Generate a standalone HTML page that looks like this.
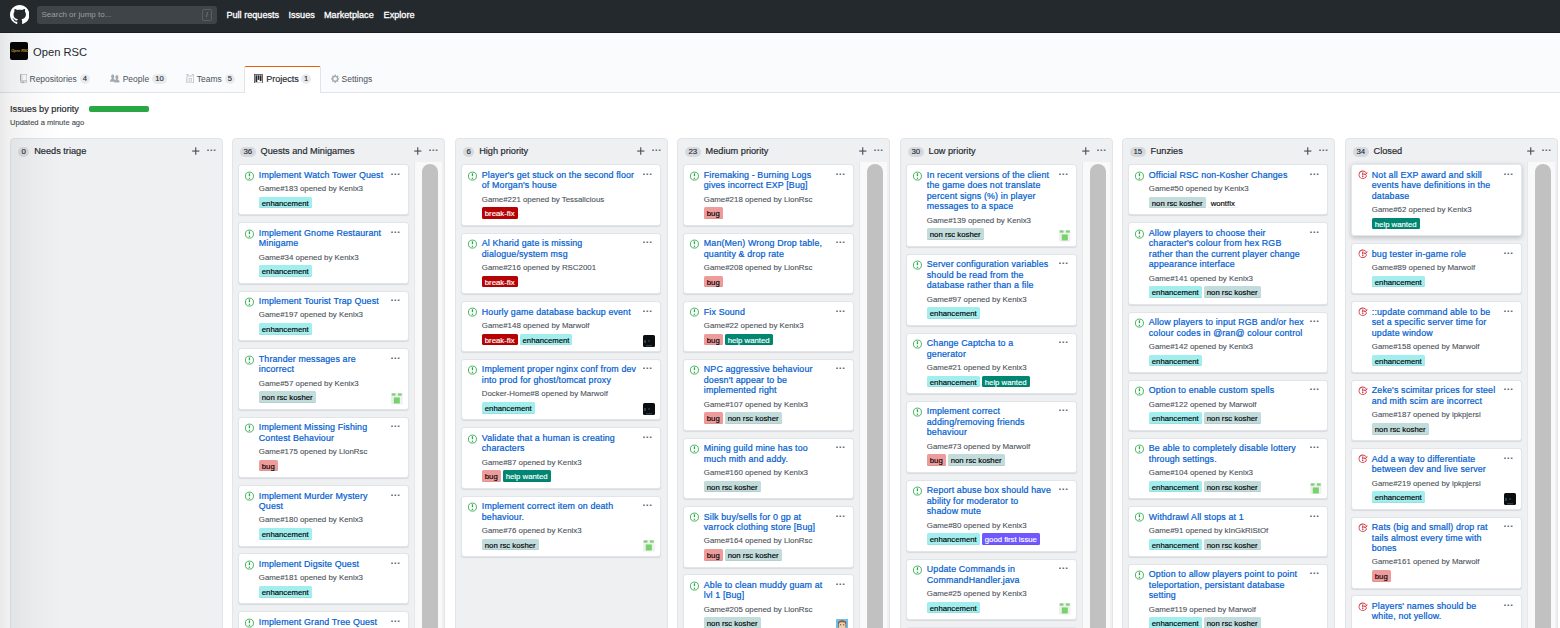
<!DOCTYPE html>
<html><head><meta charset="utf-8"><title>Open RSC Projects</title>
<style>
*{box-sizing:border-box;margin:0;padding:0}
html,body{width:1560px;height:628px;overflow:hidden;background:#fff;font-family:"Liberation Sans",sans-serif;color:#24292e}
#hdr{position:absolute;left:0;top:0;width:1560px;height:33px;background:#24292e;border-bottom:1px solid #1b1f23}
#logo{position:absolute;left:9.6px;top:4.7px}
#search{position:absolute;left:37px;top:6px;width:180px;height:18px;background:#3f4448;border-radius:3px}
#search span{position:absolute;left:4.5px;top:4px;font-size:8px;color:#9a9ea2}
#search i{position:absolute;right:5px;top:3px;width:10px;height:12px;border:1px solid #5a5f64;border-radius:2px;font-style:normal;font-size:7px;color:#8d9196;text-align:center;line-height:10px}
.nav{position:absolute;top:10px;font-size:9.15px;-webkit-text-stroke:0.3px #fff;color:#fff;white-space:nowrap}
#orghd{position:absolute;left:0;top:33px;width:1560px;height:60px;background:#fafbfc;border-bottom:1px solid #e1e4e8}
#oav{position:absolute;left:10px;top:42px;width:18px;height:18px;background:#050505;border-radius:2px}
#oav span{position:absolute;left:1.3px;top:7px;font-size:3.5px;color:#c9a227;font-style:italic;font-weight:bold;white-space:nowrap}
#oname{position:absolute;left:33px;top:46px;font-size:11.2px;color:#24292e;white-space:nowrap}
.tab{position:absolute;top:74px;font-size:8.5px;color:#4a525a;white-space:nowrap}
.tab .c{display:inline-block;margin-left:3px;-webkit-text-stroke:0.12px #24292e;padding:0 3px;height:10px;line-height:10px;border-radius:5px;background:#e8eaed;font-size:7.6px;color:#24292e;vertical-align:1px}
#seltab{position:absolute;left:244.3px;top:65.8px;width:77px;height:27.5px;background:#fff;border:1px solid #e1e4e8;border-top:1.5px solid #e36209;border-bottom:0;border-radius:2px 2px 0 0}
.tic{position:absolute}
#ptitle{position:absolute;left:10px;top:103.5px;font-size:9.2px;-webkit-text-stroke:0.18px #24292e;color:#24292e;white-space:nowrap}
#pbar{position:absolute;left:89px;top:106px;width:60px;height:6px;background:#28a745;border-radius:2px}
#pupd{position:absolute;left:10px;top:117.5px;font-size:7.55px;color:#444b52;-webkit-text-stroke:0.1px #444b52;white-space:nowrap}
#edge{position:absolute;left:0;top:33px;width:64px;height:595px;z-index:5;pointer-events:none;background:linear-gradient(to right,rgba(0,0,0,0.085) 0px,rgba(0,0,0,0.05) 11px,rgba(0,0,0,0.03) 25px,rgba(0,0,0,0.012) 45px,rgba(0,0,0,0) 62px)}
.col{position:absolute;top:138px;width:213px;height:520px;background:#eef0f2;border:1px solid #e1e4e8;border-radius:4px}
.ch{position:relative;height:25px}
.hd{position:absolute;left:7px;top:8px;display:flex;align-items:center;height:10px;white-space:nowrap}
.cnt{display:block;height:10px;padding:0 3.4px;border-radius:5px;background:#d6d9dd;font-size:7.9px;line-height:10px;text-align:center;color:#24292e;-webkit-text-stroke:0.12px #24292e}
.cn{display:block;margin-left:5px;font-size:9.2px;-webkit-text-stroke:0.18px #24292e;color:#24292e;line-height:10px;position:relative;top:-1.3px}
.plus{position:absolute;right:22.5px;top:7.9px}
.cdots{position:absolute;right:6.5px;top:10.2px}
.cards{position:absolute;left:5px;top:25.3px;width:200px}
.cards.sc{width:171px}
.cd{position:relative;background:#fff;border:1px solid #e1e4e8;border-radius:3px;margin-bottom:6.9px;padding:4.5px 6px 5.8px 19.8px;box-shadow:0 1px 1px rgba(27,31,35,0.1)}
.ic{position:absolute;left:5.8px;top:5.4px}
.icc{left:6.4px;top:5.1px}
.cd.hov{box-shadow:0 1.5px 4px rgba(27,31,35,0.22);border-color:#e4e6e9}
.dots{position:absolute;right:8.2px;top:7.5px}
.tt{font-size:8.85px;letter-spacing:0.15px;-webkit-text-stroke:0.22px #0360d0;color:#0360d0;line-height:10.5px;white-space:nowrap}
.mt{font-size:7.88px;color:#4a5158;-webkit-text-stroke:0.1px #4a5158;line-height:10px;margin-top:3.9px;white-space:nowrap}
.lbs{margin-top:2.6px;height:11.7px;white-space:nowrap;display:flex}
.lb{display:inline-block;height:11.7px;line-height:13.4px;overflow:hidden;padding:0 3px;margin-right:2px;font-size:7.75px;-webkit-text-stroke:0.15px currentColor;border-radius:1.5px;box-shadow:inset 0 -1px 0 rgba(27,31,35,0.07)}
.av{position:absolute;right:5px;bottom:4px}
.sbt{position:absolute;left:181.4px;top:22.8px;width:27.6px;height:500px;background:#f9f9f9;border-left:1px solid #e8e8e8}
.sbh{position:absolute;left:7px;top:2.2px;width:16px;height:500px;background:#c1c1c1;border-radius:8px}
</style></head><body>
<div id="hdr">
 <svg id="logo" width="19.4" height="19.4" viewBox="0 0 16 16"><path fill="#fff" d="M8 0C3.58 0 0 3.58 0 8c0 3.54 2.29 6.53 5.47 7.59.4.07.55-.17.55-.38 0-.19-.01-.82-.01-1.49-2.01.37-2.53-.49-2.69-.94-.09-.23-.48-.94-.82-1.13-.28-.15-.68-.52-.01-.53.63-.01 1.08.58 1.23.82.72 1.21 1.87.87 2.33.66.07-.52.28-.87.51-1.07-1.78-.2-3.64-.89-3.64-3.95 0-.87.31-1.59.82-2.15-.08-.2-.36-1.02.08-2.12 0 0 .67-.21 2.2.82.64-.18 1.32-.27 2-.27.68 0 1.36.09 2 .27 1.53-1.04 2.2-.82 2.2-.82.44 1.1.16 1.92.08 2.12.51.56.82 1.27.82 2.15 0 3.07-1.87 3.75-3.65 3.95.29.25.54.73.54 1.48 0 1.07-.01 1.93-.01 2.2 0 .21.15.46.55.38A8.013 8.013 0 0016 8c0-4.42-3.58-8-8-8z"/></svg>
 <div id="search"><span>Search or jump to...</span><i>/</i></div>
 <div class="nav" style="left:226.4px">Pull requests</div>
 <div class="nav" style="left:288.4px">Issues</div>
 <div class="nav" style="left:324px">Marketplace</div>
 <div class="nav" style="left:383.6px">Explore</div>
</div>
<div id="orghd"></div>
<div id="oav"><span>Open RSC</span></div>
<div id="oname">Open RSC</div>
<div id="seltab"></div>
<svg class="tic" style="left:20px;top:74px" width="7.2" height="9.6" viewBox="0 0 12 16"><path fill="#a3aab1" d="M4 9H3V8h1v1zm0-3H3v1h1V6zm0-2H3v1h1V4zm0-2H3v1h1V2zm8-1v12c0 .55-.45 1-1 1H6v2l-1.5-1.5L3 16v-2H1c-.55 0-1-.45-1-1V1c0-.55.45-1 1-1h10c.55 0 1 .45 1 1zm-1 10H1v2h2v-1h3v1h5v-2zm0-10H2v9h9V1z"/></svg>
<div class="tab" style="left:29.5px">Repositories<span class="c">4</span></div>
<svg class="tic" style="left:110.1px;top:74px" width="9.6" height="9.6" viewBox="0 0 16 16"><path fill="#a3aab1" d="M16 12.999c0 .439-.45 1-1 1H7.995c-.539 0-.994-.447-.995-.999H1c-.54 0-1-.561-1-1 0-2.634 3-4 3-4s.229-.409 0-1c-.841-.621-1.058-.59-1-3 .058-2.419 1.367-3 2.5-3s2.442.58 2.5 3c.058 2.410-.159 2.379-1 3-.229.59 0 1 0 1s1.549.711 2.420 2.088C9.196 9.369 10 8.999 10 8.999s.229-.409 0-1c-.841-.62-1.058-.59-1-3 .058-2.419 1.367-3 2.5-3s2.437.581 2.495 3c.059 2.410-.158 2.380-1 3-.229.59 0 1 0 1s3.005 1.366 3.005 4z"/></svg>
<div class="tab" style="left:122.7px">People<span class="c">10</span></div>
<svg class="tic" style="left:185.8px;top:73.8px" width="8.4" height="9.6" viewBox="0 0 14 16"><path fill="none" stroke="#a3aab1" stroke-width="1.1" d="M3.6 0.8 C3.8 2 4.3 3 4.5 3.5 H9.5 C9.7 3 10.2 2 10.4 0.8 M3.6 0.8 H1.4 C1.7 2.6 2 3.6 2 4.5 C1.4 5 1.3 5.6 1.3 6.2 V15 H12.7 V6.2 C12.7 5.6 12.6 5 12 4.5 C12 3.6 12.3 2.6 12.6 0.8 H10.4"/><rect x="5" y="7.5" width="4" height="4.5" fill="none" stroke="#a3aab1" stroke-width="0.9"/></svg>
<div class="tab" style="left:196.7px">Teams<span class="c">5</span></div>
<svg class="tic" style="left:254px;top:73.8px" width="9" height="9.6" viewBox="0 0 15 16"><rect x="0.8" y="0.8" width="13.4" height="14.4" fill="none" stroke="#444" stroke-width="1.3"/><rect x="2.4" y="2.2" width="3" height="11.2" fill="#24292e"/><rect x="6.1" y="2.2" width="2.8" height="7.6" fill="#24292e"/><rect x="9.6" y="2.2" width="3" height="9.6" fill="#24292e"/></svg>
<div class="tab" style="left:266.2px;color:#24292e"><span style="font-size:9.05px;-webkit-text-stroke:0.15px #24292e">Projects</span><span class="c" style="margin-left:2px">1</span></div>
<svg class="tic" style="left:331px;top:74.2px" width="8.4" height="9.6" viewBox="0 0 14 16"><path fill="#a3aab1" d="M14 8.77v-1.6l-1.94-.64-.45-1.09.88-1.84-1.130-1.130-1.810.91-1.090-.45-.69-1.920h-1.6l-.63 1.940-1.110.45-1.840-.88-1.130 1.130.91 1.810-.45 1.090L0 7.230v1.590l1.940.64.45 1.090-.88 1.840 1.130 1.130 1.810-.91 1.090.45.69 1.920h1.590l.63-1.940 1.110-.45 1.840.88 1.130-1.130-.92-1.810.47-1.090L14 8.750v.02zM7 11c-1.660 0-3-1.340-3-3s1.340-3 3-3 3 1.340 3 3-1.340 3-3 3z"/></svg>
<div class="tab" style="left:341.5px">Settings</div>
<div id="ptitle">Issues by priority</div>
<div id="pbar"></div>
<div id="pupd">Updated a minute ago</div>
<div class="col" style="left:10.0px"><div class="ch"><span class="hd"><span class="cnt">0</span><span class="cn">Needs triage</span></span><svg class="plus" width="8" height="8" viewBox="0 0 8 8"><rect x="3.2" y="0.3" width="1.1" height="7.5" fill="#444d56"/><rect x="0.2" y="3.5" width="7.2" height="1.1" fill="#444d56"/></svg><svg class="cdots" width="9" height="3" viewBox="0 0 9 3"><rect x="0.2" y="0.5" width="1.7" height="1.5" fill="#6a737d"/><rect x="3.5" y="0.5" width="1.7" height="1.5" fill="#6a737d"/><rect x="6.8" y="0.5" width="1.7" height="1.5" fill="#6a737d"/></svg></div><div class="cards"></div></div><div class="col" style="left:232.0px"><div class="ch"><span class="hd"><span class="cnt">36</span><span class="cn">Quests and Minigames</span></span><svg class="plus" width="8" height="8" viewBox="0 0 8 8"><rect x="3.2" y="0.3" width="1.1" height="7.5" fill="#444d56"/><rect x="0.2" y="3.5" width="7.2" height="1.1" fill="#444d56"/></svg><svg class="cdots" width="9" height="3" viewBox="0 0 9 3"><rect x="0.2" y="0.5" width="1.7" height="1.5" fill="#6a737d"/><rect x="3.5" y="0.5" width="1.7" height="1.5" fill="#6a737d"/><rect x="6.8" y="0.5" width="1.7" height="1.5" fill="#6a737d"/></svg></div><div class="cards sc"><div class="cd"><svg class="ic" width="8.9" height="10.2" viewBox="0 0 14 16"><circle cx="7" cy="8" r="6.3" fill="none" stroke="#28a745" stroke-width="1.35"/><rect x="6" y="3.6" width="2" height="4.5" fill="#28a745"/><rect x="6" y="10.5" width="2" height="1.9" fill="#28a745"/></svg><svg class="dots" width="9" height="3" viewBox="0 0 9 3"><rect x="0.2" y="0.5" width="1.7" height="1.5" fill="#6a737d"/><rect x="3.5" y="0.5" width="1.7" height="1.5" fill="#6a737d"/><rect x="6.8" y="0.5" width="1.7" height="1.5" fill="#6a737d"/></svg><div class="tt">Implement Watch Tower Quest</div><div class="mt">Game#183 opened by Kenix3</div><div class="lbs"><span class="lb" style="background:#a2eeef;color:#000">enhancement</span></div></div><div class="cd"><svg class="ic" width="8.9" height="10.2" viewBox="0 0 14 16"><circle cx="7" cy="8" r="6.3" fill="none" stroke="#28a745" stroke-width="1.35"/><rect x="6" y="3.6" width="2" height="4.5" fill="#28a745"/><rect x="6" y="10.5" width="2" height="1.9" fill="#28a745"/></svg><svg class="dots" width="9" height="3" viewBox="0 0 9 3"><rect x="0.2" y="0.5" width="1.7" height="1.5" fill="#6a737d"/><rect x="3.5" y="0.5" width="1.7" height="1.5" fill="#6a737d"/><rect x="6.8" y="0.5" width="1.7" height="1.5" fill="#6a737d"/></svg><div class="tt">Implement Gnome Restaurant<br>Minigame</div><div class="mt">Game#34 opened by Kenix3</div><div class="lbs"><span class="lb" style="background:#a2eeef;color:#000">enhancement</span></div></div><div class="cd"><svg class="ic" width="8.9" height="10.2" viewBox="0 0 14 16"><circle cx="7" cy="8" r="6.3" fill="none" stroke="#28a745" stroke-width="1.35"/><rect x="6" y="3.6" width="2" height="4.5" fill="#28a745"/><rect x="6" y="10.5" width="2" height="1.9" fill="#28a745"/></svg><svg class="dots" width="9" height="3" viewBox="0 0 9 3"><rect x="0.2" y="0.5" width="1.7" height="1.5" fill="#6a737d"/><rect x="3.5" y="0.5" width="1.7" height="1.5" fill="#6a737d"/><rect x="6.8" y="0.5" width="1.7" height="1.5" fill="#6a737d"/></svg><div class="tt">Implement Tourist Trap Quest</div><div class="mt">Game#197 opened by Kenix3</div><div class="lbs"><span class="lb" style="background:#a2eeef;color:#000">enhancement</span></div></div><div class="cd"><svg class="ic" width="8.9" height="10.2" viewBox="0 0 14 16"><circle cx="7" cy="8" r="6.3" fill="none" stroke="#28a745" stroke-width="1.35"/><rect x="6" y="3.6" width="2" height="4.5" fill="#28a745"/><rect x="6" y="10.5" width="2" height="1.9" fill="#28a745"/></svg><svg class="dots" width="9" height="3" viewBox="0 0 9 3"><rect x="0.2" y="0.5" width="1.7" height="1.5" fill="#6a737d"/><rect x="3.5" y="0.5" width="1.7" height="1.5" fill="#6a737d"/><rect x="6.8" y="0.5" width="1.7" height="1.5" fill="#6a737d"/></svg><div class="tt">Thrander messages are<br>incorrect</div><div class="mt">Game#57 opened by Kenix3</div><div class="lbs"><span class="lb" style="background:#c2dcdc;color:#000">non rsc kosher</span></div><svg class="av" width="11.6" height="11.6" viewBox="0 0 23 23"><rect width="23" height="23" fill="#f0f0f0"/><rect x="1.5" y="0.8" width="7.4" height="4.4" fill="#76d26a"/><rect x="13.8" y="0.8" width="7.4" height="4.4" fill="#76d26a"/><rect x="5.5" y="8.8" width="12" height="12" fill="#76d26a"/></svg></div><div class="cd"><svg class="ic" width="8.9" height="10.2" viewBox="0 0 14 16"><circle cx="7" cy="8" r="6.3" fill="none" stroke="#28a745" stroke-width="1.35"/><rect x="6" y="3.6" width="2" height="4.5" fill="#28a745"/><rect x="6" y="10.5" width="2" height="1.9" fill="#28a745"/></svg><svg class="dots" width="9" height="3" viewBox="0 0 9 3"><rect x="0.2" y="0.5" width="1.7" height="1.5" fill="#6a737d"/><rect x="3.5" y="0.5" width="1.7" height="1.5" fill="#6a737d"/><rect x="6.8" y="0.5" width="1.7" height="1.5" fill="#6a737d"/></svg><div class="tt">Implement Missing Fishing<br>Contest Behaviour</div><div class="mt">Game#175 opened by LionRsc</div><div class="lbs"><span class="lb" style="background:#ee9b9b;color:#000">bug</span></div></div><div class="cd"><svg class="ic" width="8.9" height="10.2" viewBox="0 0 14 16"><circle cx="7" cy="8" r="6.3" fill="none" stroke="#28a745" stroke-width="1.35"/><rect x="6" y="3.6" width="2" height="4.5" fill="#28a745"/><rect x="6" y="10.5" width="2" height="1.9" fill="#28a745"/></svg><svg class="dots" width="9" height="3" viewBox="0 0 9 3"><rect x="0.2" y="0.5" width="1.7" height="1.5" fill="#6a737d"/><rect x="3.5" y="0.5" width="1.7" height="1.5" fill="#6a737d"/><rect x="6.8" y="0.5" width="1.7" height="1.5" fill="#6a737d"/></svg><div class="tt">Implement Murder Mystery<br>Quest</div><div class="mt">Game#180 opened by Kenix3</div><div class="lbs"><span class="lb" style="background:#a2eeef;color:#000">enhancement</span></div></div><div class="cd"><svg class="ic" width="8.9" height="10.2" viewBox="0 0 14 16"><circle cx="7" cy="8" r="6.3" fill="none" stroke="#28a745" stroke-width="1.35"/><rect x="6" y="3.6" width="2" height="4.5" fill="#28a745"/><rect x="6" y="10.5" width="2" height="1.9" fill="#28a745"/></svg><svg class="dots" width="9" height="3" viewBox="0 0 9 3"><rect x="0.2" y="0.5" width="1.7" height="1.5" fill="#6a737d"/><rect x="3.5" y="0.5" width="1.7" height="1.5" fill="#6a737d"/><rect x="6.8" y="0.5" width="1.7" height="1.5" fill="#6a737d"/></svg><div class="tt">Implement Digsite Quest</div><div class="mt">Game#181 opened by Kenix3</div><div class="lbs"><span class="lb" style="background:#a2eeef;color:#000">enhancement</span></div></div><div class="cd"><svg class="ic" width="8.9" height="10.2" viewBox="0 0 14 16"><circle cx="7" cy="8" r="6.3" fill="none" stroke="#28a745" stroke-width="1.35"/><rect x="6" y="3.6" width="2" height="4.5" fill="#28a745"/><rect x="6" y="10.5" width="2" height="1.9" fill="#28a745"/></svg><svg class="dots" width="9" height="3" viewBox="0 0 9 3"><rect x="0.2" y="0.5" width="1.7" height="1.5" fill="#6a737d"/><rect x="3.5" y="0.5" width="1.7" height="1.5" fill="#6a737d"/><rect x="6.8" y="0.5" width="1.7" height="1.5" fill="#6a737d"/></svg><div class="tt">Implement Grand Tree Quest</div><div class="mt">Game#182 opened by Kenix3</div><div class="lbs"><span class="lb" style="background:#a2eeef;color:#000">enhancement</span></div></div></div><div class="sbt"><div class="sbh"></div></div></div><div class="col" style="left:455.0px"><div class="ch"><span class="hd"><span class="cnt">6</span><span class="cn">High priority</span></span><svg class="plus" width="8" height="8" viewBox="0 0 8 8"><rect x="3.2" y="0.3" width="1.1" height="7.5" fill="#444d56"/><rect x="0.2" y="3.5" width="7.2" height="1.1" fill="#444d56"/></svg><svg class="cdots" width="9" height="3" viewBox="0 0 9 3"><rect x="0.2" y="0.5" width="1.7" height="1.5" fill="#6a737d"/><rect x="3.5" y="0.5" width="1.7" height="1.5" fill="#6a737d"/><rect x="6.8" y="0.5" width="1.7" height="1.5" fill="#6a737d"/></svg></div><div class="cards"><div class="cd"><svg class="ic" width="8.9" height="10.2" viewBox="0 0 14 16"><circle cx="7" cy="8" r="6.3" fill="none" stroke="#28a745" stroke-width="1.35"/><rect x="6" y="3.6" width="2" height="4.5" fill="#28a745"/><rect x="6" y="10.5" width="2" height="1.9" fill="#28a745"/></svg><svg class="dots" width="9" height="3" viewBox="0 0 9 3"><rect x="0.2" y="0.5" width="1.7" height="1.5" fill="#6a737d"/><rect x="3.5" y="0.5" width="1.7" height="1.5" fill="#6a737d"/><rect x="6.8" y="0.5" width="1.7" height="1.5" fill="#6a737d"/></svg><div class="tt">Player&#x27;s get stuck on the second floor<br>of Morgan&#x27;s house</div><div class="mt">Game#221 opened by Tessalicious</div><div class="lbs"><span class="lb" style="background:#b60205;color:#fff">break-fix</span></div></div><div class="cd"><svg class="ic" width="8.9" height="10.2" viewBox="0 0 14 16"><circle cx="7" cy="8" r="6.3" fill="none" stroke="#28a745" stroke-width="1.35"/><rect x="6" y="3.6" width="2" height="4.5" fill="#28a745"/><rect x="6" y="10.5" width="2" height="1.9" fill="#28a745"/></svg><svg class="dots" width="9" height="3" viewBox="0 0 9 3"><rect x="0.2" y="0.5" width="1.7" height="1.5" fill="#6a737d"/><rect x="3.5" y="0.5" width="1.7" height="1.5" fill="#6a737d"/><rect x="6.8" y="0.5" width="1.7" height="1.5" fill="#6a737d"/></svg><div class="tt">Al Kharid gate is missing<br>dialogue/system msg</div><div class="mt">Game#216 opened by RSC2001</div><div class="lbs"><span class="lb" style="background:#b60205;color:#fff">break-fix</span></div></div><div class="cd"><svg class="ic" width="8.9" height="10.2" viewBox="0 0 14 16"><circle cx="7" cy="8" r="6.3" fill="none" stroke="#28a745" stroke-width="1.35"/><rect x="6" y="3.6" width="2" height="4.5" fill="#28a745"/><rect x="6" y="10.5" width="2" height="1.9" fill="#28a745"/></svg><svg class="dots" width="9" height="3" viewBox="0 0 9 3"><rect x="0.2" y="0.5" width="1.7" height="1.5" fill="#6a737d"/><rect x="3.5" y="0.5" width="1.7" height="1.5" fill="#6a737d"/><rect x="6.8" y="0.5" width="1.7" height="1.5" fill="#6a737d"/></svg><div class="tt">Hourly game database backup event</div><div class="mt">Game#148 opened by Marwolf</div><div class="lbs"><span class="lb" style="background:#b60205;color:#fff">break-fix</span><span class="lb" style="background:#a2eeef;color:#000">enhancement</span></div><svg class="av" width="12" height="12" viewBox="0 0 12 12"><rect width="12" height="12" rx="1.5" fill="#0b0d0f"/><rect x="1" y="5" width="2" height="3" fill="#3c5a6a" opacity="0.7"/><rect x="5" y="5" width="2" height="2" fill="#2e4a5e" opacity="0.6"/><rect x="3" y="10" width="6" height="1.5" fill="#4a6a7a" opacity="0.5"/></svg></div><div class="cd"><svg class="ic" width="8.9" height="10.2" viewBox="0 0 14 16"><circle cx="7" cy="8" r="6.3" fill="none" stroke="#28a745" stroke-width="1.35"/><rect x="6" y="3.6" width="2" height="4.5" fill="#28a745"/><rect x="6" y="10.5" width="2" height="1.9" fill="#28a745"/></svg><svg class="dots" width="9" height="3" viewBox="0 0 9 3"><rect x="0.2" y="0.5" width="1.7" height="1.5" fill="#6a737d"/><rect x="3.5" y="0.5" width="1.7" height="1.5" fill="#6a737d"/><rect x="6.8" y="0.5" width="1.7" height="1.5" fill="#6a737d"/></svg><div class="tt">Implement proper nginx conf from dev<br>into prod for ghost/tomcat proxy</div><div class="mt">Docker-Home#8 opened by Marwolf</div><div class="lbs"><span class="lb" style="background:#a2eeef;color:#000">enhancement</span></div><svg class="av" width="12" height="12" viewBox="0 0 12 12"><rect width="12" height="12" rx="1.5" fill="#0b0d0f"/><rect x="1" y="5" width="2" height="3" fill="#3c5a6a" opacity="0.7"/><rect x="5" y="5" width="2" height="2" fill="#2e4a5e" opacity="0.6"/><rect x="3" y="10" width="6" height="1.5" fill="#4a6a7a" opacity="0.5"/></svg></div><div class="cd"><svg class="ic" width="8.9" height="10.2" viewBox="0 0 14 16"><circle cx="7" cy="8" r="6.3" fill="none" stroke="#28a745" stroke-width="1.35"/><rect x="6" y="3.6" width="2" height="4.5" fill="#28a745"/><rect x="6" y="10.5" width="2" height="1.9" fill="#28a745"/></svg><svg class="dots" width="9" height="3" viewBox="0 0 9 3"><rect x="0.2" y="0.5" width="1.7" height="1.5" fill="#6a737d"/><rect x="3.5" y="0.5" width="1.7" height="1.5" fill="#6a737d"/><rect x="6.8" y="0.5" width="1.7" height="1.5" fill="#6a737d"/></svg><div class="tt">Validate that a human is creating<br>characters</div><div class="mt">Game#87 opened by Kenix3</div><div class="lbs"><span class="lb" style="background:#ee9b9b;color:#000">bug</span><span class="lb" style="background:#008672;color:#fff">help wanted</span></div></div><div class="cd"><svg class="ic" width="8.9" height="10.2" viewBox="0 0 14 16"><circle cx="7" cy="8" r="6.3" fill="none" stroke="#28a745" stroke-width="1.35"/><rect x="6" y="3.6" width="2" height="4.5" fill="#28a745"/><rect x="6" y="10.5" width="2" height="1.9" fill="#28a745"/></svg><svg class="dots" width="9" height="3" viewBox="0 0 9 3"><rect x="0.2" y="0.5" width="1.7" height="1.5" fill="#6a737d"/><rect x="3.5" y="0.5" width="1.7" height="1.5" fill="#6a737d"/><rect x="6.8" y="0.5" width="1.7" height="1.5" fill="#6a737d"/></svg><div class="tt">Implement correct item on death<br>behaviour.</div><div class="mt">Game#76 opened by Kenix3</div><div class="lbs"><span class="lb" style="background:#c2dcdc;color:#000">non rsc kosher</span></div><svg class="av" width="11.6" height="11.6" viewBox="0 0 23 23"><rect width="23" height="23" fill="#f0f0f0"/><rect x="1.5" y="0.8" width="7.4" height="4.4" fill="#76d26a"/><rect x="13.8" y="0.8" width="7.4" height="4.4" fill="#76d26a"/><rect x="5.5" y="8.8" width="12" height="12" fill="#76d26a"/></svg></div></div></div><div class="col" style="left:677.0px"><div class="ch"><span class="hd"><span class="cnt">23</span><span class="cn">Medium priority</span></span><svg class="plus" width="8" height="8" viewBox="0 0 8 8"><rect x="3.2" y="0.3" width="1.1" height="7.5" fill="#444d56"/><rect x="0.2" y="3.5" width="7.2" height="1.1" fill="#444d56"/></svg><svg class="cdots" width="9" height="3" viewBox="0 0 9 3"><rect x="0.2" y="0.5" width="1.7" height="1.5" fill="#6a737d"/><rect x="3.5" y="0.5" width="1.7" height="1.5" fill="#6a737d"/><rect x="6.8" y="0.5" width="1.7" height="1.5" fill="#6a737d"/></svg></div><div class="cards sc"><div class="cd"><svg class="ic" width="8.9" height="10.2" viewBox="0 0 14 16"><circle cx="7" cy="8" r="6.3" fill="none" stroke="#28a745" stroke-width="1.35"/><rect x="6" y="3.6" width="2" height="4.5" fill="#28a745"/><rect x="6" y="10.5" width="2" height="1.9" fill="#28a745"/></svg><svg class="dots" width="9" height="3" viewBox="0 0 9 3"><rect x="0.2" y="0.5" width="1.7" height="1.5" fill="#6a737d"/><rect x="3.5" y="0.5" width="1.7" height="1.5" fill="#6a737d"/><rect x="6.8" y="0.5" width="1.7" height="1.5" fill="#6a737d"/></svg><div class="tt">Firemaking - Burning Logs<br>gives incorrect EXP [Bug]</div><div class="mt">Game#218 opened by LionRsc</div><div class="lbs"><span class="lb" style="background:#ee9b9b;color:#000">bug</span></div></div><div class="cd"><svg class="ic" width="8.9" height="10.2" viewBox="0 0 14 16"><circle cx="7" cy="8" r="6.3" fill="none" stroke="#28a745" stroke-width="1.35"/><rect x="6" y="3.6" width="2" height="4.5" fill="#28a745"/><rect x="6" y="10.5" width="2" height="1.9" fill="#28a745"/></svg><svg class="dots" width="9" height="3" viewBox="0 0 9 3"><rect x="0.2" y="0.5" width="1.7" height="1.5" fill="#6a737d"/><rect x="3.5" y="0.5" width="1.7" height="1.5" fill="#6a737d"/><rect x="6.8" y="0.5" width="1.7" height="1.5" fill="#6a737d"/></svg><div class="tt">Man(Men) Wrong Drop table,<br>quantity &amp; drop rate</div><div class="mt">Game#208 opened by LionRsc</div><div class="lbs"><span class="lb" style="background:#ee9b9b;color:#000">bug</span></div></div><div class="cd"><svg class="ic" width="8.9" height="10.2" viewBox="0 0 14 16"><circle cx="7" cy="8" r="6.3" fill="none" stroke="#28a745" stroke-width="1.35"/><rect x="6" y="3.6" width="2" height="4.5" fill="#28a745"/><rect x="6" y="10.5" width="2" height="1.9" fill="#28a745"/></svg><svg class="dots" width="9" height="3" viewBox="0 0 9 3"><rect x="0.2" y="0.5" width="1.7" height="1.5" fill="#6a737d"/><rect x="3.5" y="0.5" width="1.7" height="1.5" fill="#6a737d"/><rect x="6.8" y="0.5" width="1.7" height="1.5" fill="#6a737d"/></svg><div class="tt">Fix Sound</div><div class="mt">Game#22 opened by Kenix3</div><div class="lbs"><span class="lb" style="background:#ee9b9b;color:#000">bug</span><span class="lb" style="background:#008672;color:#fff">help wanted</span></div></div><div class="cd"><svg class="ic" width="8.9" height="10.2" viewBox="0 0 14 16"><circle cx="7" cy="8" r="6.3" fill="none" stroke="#28a745" stroke-width="1.35"/><rect x="6" y="3.6" width="2" height="4.5" fill="#28a745"/><rect x="6" y="10.5" width="2" height="1.9" fill="#28a745"/></svg><svg class="dots" width="9" height="3" viewBox="0 0 9 3"><rect x="0.2" y="0.5" width="1.7" height="1.5" fill="#6a737d"/><rect x="3.5" y="0.5" width="1.7" height="1.5" fill="#6a737d"/><rect x="6.8" y="0.5" width="1.7" height="1.5" fill="#6a737d"/></svg><div class="tt">NPC aggressive behaviour<br>doesn&#x27;t appear to be<br>implemented right</div><div class="mt">Game#107 opened by Kenix3</div><div class="lbs"><span class="lb" style="background:#ee9b9b;color:#000">bug</span><span class="lb" style="background:#c2dcdc;color:#000">non rsc kosher</span></div></div><div class="cd"><svg class="ic" width="8.9" height="10.2" viewBox="0 0 14 16"><circle cx="7" cy="8" r="6.3" fill="none" stroke="#28a745" stroke-width="1.35"/><rect x="6" y="3.6" width="2" height="4.5" fill="#28a745"/><rect x="6" y="10.5" width="2" height="1.9" fill="#28a745"/></svg><svg class="dots" width="9" height="3" viewBox="0 0 9 3"><rect x="0.2" y="0.5" width="1.7" height="1.5" fill="#6a737d"/><rect x="3.5" y="0.5" width="1.7" height="1.5" fill="#6a737d"/><rect x="6.8" y="0.5" width="1.7" height="1.5" fill="#6a737d"/></svg><div class="tt">Mining guild mine has too<br>much mith and addy.</div><div class="mt">Game#160 opened by Kenix3</div><div class="lbs"><span class="lb" style="background:#c2dcdc;color:#000">non rsc kosher</span></div></div><div class="cd"><svg class="ic" width="8.9" height="10.2" viewBox="0 0 14 16"><circle cx="7" cy="8" r="6.3" fill="none" stroke="#28a745" stroke-width="1.35"/><rect x="6" y="3.6" width="2" height="4.5" fill="#28a745"/><rect x="6" y="10.5" width="2" height="1.9" fill="#28a745"/></svg><svg class="dots" width="9" height="3" viewBox="0 0 9 3"><rect x="0.2" y="0.5" width="1.7" height="1.5" fill="#6a737d"/><rect x="3.5" y="0.5" width="1.7" height="1.5" fill="#6a737d"/><rect x="6.8" y="0.5" width="1.7" height="1.5" fill="#6a737d"/></svg><div class="tt">Silk buy/sells for 0 gp at<br>varrock clothing store [Bug]</div><div class="mt">Game#164 opened by LionRsc</div><div class="lbs"><span class="lb" style="background:#ee9b9b;color:#000">bug</span><span class="lb" style="background:#c2dcdc;color:#000">non rsc kosher</span></div></div><div class="cd"><svg class="ic" width="8.9" height="10.2" viewBox="0 0 14 16"><circle cx="7" cy="8" r="6.3" fill="none" stroke="#28a745" stroke-width="1.35"/><rect x="6" y="3.6" width="2" height="4.5" fill="#28a745"/><rect x="6" y="10.5" width="2" height="1.9" fill="#28a745"/></svg><svg class="dots" width="9" height="3" viewBox="0 0 9 3"><rect x="0.2" y="0.5" width="1.7" height="1.5" fill="#6a737d"/><rect x="3.5" y="0.5" width="1.7" height="1.5" fill="#6a737d"/><rect x="6.8" y="0.5" width="1.7" height="1.5" fill="#6a737d"/></svg><div class="tt">Able to clean muddy guam at<br>lvl 1 [Bug]</div><div class="mt">Game#205 opened by LionRsc</div><div class="lbs"><span class="lb" style="background:#c2dcdc;color:#000">non rsc kosher</span></div><svg class="av" width="12.3" height="12.3" viewBox="0 0 12 12"><rect width="12" height="12" rx="1" fill="#70bde8"/><path d="M2 3 Q6 -0.5 10 3 L10 8 L2 8z" fill="#8a5a34"/><rect x="2.8" y="3.2" width="6.4" height="6.8" rx="2" fill="#f2cdb4"/><rect x="3.9" y="5" width="1.2" height="1.2" fill="#2f8a2f"/><rect x="6.9" y="5" width="1.2" height="1.2" fill="#2f8a2f"/><rect x="3" y="10" width="6" height="2" fill="#d8e4ec"/></svg></div></div><div class="sbt"><div class="sbh"></div></div></div><div class="col" style="left:900.0px"><div class="ch"><span class="hd"><span class="cnt">30</span><span class="cn">Low priority</span></span><svg class="plus" width="8" height="8" viewBox="0 0 8 8"><rect x="3.2" y="0.3" width="1.1" height="7.5" fill="#444d56"/><rect x="0.2" y="3.5" width="7.2" height="1.1" fill="#444d56"/></svg><svg class="cdots" width="9" height="3" viewBox="0 0 9 3"><rect x="0.2" y="0.5" width="1.7" height="1.5" fill="#6a737d"/><rect x="3.5" y="0.5" width="1.7" height="1.5" fill="#6a737d"/><rect x="6.8" y="0.5" width="1.7" height="1.5" fill="#6a737d"/></svg></div><div class="cards sc"><div class="cd"><svg class="ic" width="8.9" height="10.2" viewBox="0 0 14 16"><circle cx="7" cy="8" r="6.3" fill="none" stroke="#28a745" stroke-width="1.35"/><rect x="6" y="3.6" width="2" height="4.5" fill="#28a745"/><rect x="6" y="10.5" width="2" height="1.9" fill="#28a745"/></svg><svg class="dots" width="9" height="3" viewBox="0 0 9 3"><rect x="0.2" y="0.5" width="1.7" height="1.5" fill="#6a737d"/><rect x="3.5" y="0.5" width="1.7" height="1.5" fill="#6a737d"/><rect x="6.8" y="0.5" width="1.7" height="1.5" fill="#6a737d"/></svg><div class="tt">In recent versions of the client<br>the game does not translate<br>percent signs (%) in player<br>messages to a space</div><div class="mt">Game#139 opened by Kenix3</div><div class="lbs"><span class="lb" style="background:#c2dcdc;color:#000">non rsc kosher</span></div><svg class="av" width="11.6" height="11.6" viewBox="0 0 23 23"><rect width="23" height="23" fill="#f0f0f0"/><rect x="1.5" y="0.8" width="7.4" height="4.4" fill="#76d26a"/><rect x="13.8" y="0.8" width="7.4" height="4.4" fill="#76d26a"/><rect x="5.5" y="8.8" width="12" height="12" fill="#76d26a"/></svg></div><div class="cd"><svg class="ic" width="8.9" height="10.2" viewBox="0 0 14 16"><circle cx="7" cy="8" r="6.3" fill="none" stroke="#28a745" stroke-width="1.35"/><rect x="6" y="3.6" width="2" height="4.5" fill="#28a745"/><rect x="6" y="10.5" width="2" height="1.9" fill="#28a745"/></svg><svg class="dots" width="9" height="3" viewBox="0 0 9 3"><rect x="0.2" y="0.5" width="1.7" height="1.5" fill="#6a737d"/><rect x="3.5" y="0.5" width="1.7" height="1.5" fill="#6a737d"/><rect x="6.8" y="0.5" width="1.7" height="1.5" fill="#6a737d"/></svg><div class="tt">Server configuration variables<br>should be read from the<br>database rather than a file</div><div class="mt">Game#97 opened by Kenix3</div><div class="lbs"><span class="lb" style="background:#a2eeef;color:#000">enhancement</span></div></div><div class="cd"><svg class="ic" width="8.9" height="10.2" viewBox="0 0 14 16"><circle cx="7" cy="8" r="6.3" fill="none" stroke="#28a745" stroke-width="1.35"/><rect x="6" y="3.6" width="2" height="4.5" fill="#28a745"/><rect x="6" y="10.5" width="2" height="1.9" fill="#28a745"/></svg><svg class="dots" width="9" height="3" viewBox="0 0 9 3"><rect x="0.2" y="0.5" width="1.7" height="1.5" fill="#6a737d"/><rect x="3.5" y="0.5" width="1.7" height="1.5" fill="#6a737d"/><rect x="6.8" y="0.5" width="1.7" height="1.5" fill="#6a737d"/></svg><div class="tt">Change Captcha to a<br>generator</div><div class="mt">Game#21 opened by Kenix3</div><div class="lbs"><span class="lb" style="background:#a2eeef;color:#000">enhancement</span><span class="lb" style="background:#008672;color:#fff">help wanted</span></div></div><div class="cd"><svg class="ic" width="8.9" height="10.2" viewBox="0 0 14 16"><circle cx="7" cy="8" r="6.3" fill="none" stroke="#28a745" stroke-width="1.35"/><rect x="6" y="3.6" width="2" height="4.5" fill="#28a745"/><rect x="6" y="10.5" width="2" height="1.9" fill="#28a745"/></svg><svg class="dots" width="9" height="3" viewBox="0 0 9 3"><rect x="0.2" y="0.5" width="1.7" height="1.5" fill="#6a737d"/><rect x="3.5" y="0.5" width="1.7" height="1.5" fill="#6a737d"/><rect x="6.8" y="0.5" width="1.7" height="1.5" fill="#6a737d"/></svg><div class="tt">Implement correct<br>adding/removing friends<br>behaviour</div><div class="mt">Game#73 opened by Marwolf</div><div class="lbs"><span class="lb" style="background:#ee9b9b;color:#000">bug</span><span class="lb" style="background:#c2dcdc;color:#000">non rsc kosher</span></div></div><div class="cd"><svg class="ic" width="8.9" height="10.2" viewBox="0 0 14 16"><circle cx="7" cy="8" r="6.3" fill="none" stroke="#28a745" stroke-width="1.35"/><rect x="6" y="3.6" width="2" height="4.5" fill="#28a745"/><rect x="6" y="10.5" width="2" height="1.9" fill="#28a745"/></svg><svg class="dots" width="9" height="3" viewBox="0 0 9 3"><rect x="0.2" y="0.5" width="1.7" height="1.5" fill="#6a737d"/><rect x="3.5" y="0.5" width="1.7" height="1.5" fill="#6a737d"/><rect x="6.8" y="0.5" width="1.7" height="1.5" fill="#6a737d"/></svg><div class="tt">Report abuse box should have<br>ability for moderator to<br>shadow mute</div><div class="mt">Game#80 opened by Kenix3</div><div class="lbs"><span class="lb" style="background:#a2eeef;color:#000">enhancement</span><span class="lb" style="background:#7057ff;color:#fff">good first issue</span></div></div><div class="cd"><svg class="ic" width="8.9" height="10.2" viewBox="0 0 14 16"><circle cx="7" cy="8" r="6.3" fill="none" stroke="#28a745" stroke-width="1.35"/><rect x="6" y="3.6" width="2" height="4.5" fill="#28a745"/><rect x="6" y="10.5" width="2" height="1.9" fill="#28a745"/></svg><svg class="dots" width="9" height="3" viewBox="0 0 9 3"><rect x="0.2" y="0.5" width="1.7" height="1.5" fill="#6a737d"/><rect x="3.5" y="0.5" width="1.7" height="1.5" fill="#6a737d"/><rect x="6.8" y="0.5" width="1.7" height="1.5" fill="#6a737d"/></svg><div class="tt">Update Commands in<br>CommandHandler.java</div><div class="mt">Game#25 opened by Kenix3</div><div class="lbs"><span class="lb" style="background:#a2eeef;color:#000">enhancement</span></div><svg class="av" width="11.6" height="11.6" viewBox="0 0 23 23"><rect width="23" height="23" fill="#f0f0f0"/><rect x="1.5" y="0.8" width="7.4" height="4.4" fill="#76d26a"/><rect x="13.8" y="0.8" width="7.4" height="4.4" fill="#76d26a"/><rect x="5.5" y="8.8" width="12" height="12" fill="#76d26a"/></svg></div><div class="cd"><svg class="ic" width="8.9" height="10.2" viewBox="0 0 14 16"><circle cx="7" cy="8" r="6.3" fill="none" stroke="#28a745" stroke-width="1.35"/><rect x="6" y="3.6" width="2" height="4.5" fill="#28a745"/><rect x="6" y="10.5" width="2" height="1.9" fill="#28a745"/></svg><svg class="dots" width="9" height="3" viewBox="0 0 9 3"><rect x="0.2" y="0.5" width="1.7" height="1.5" fill="#6a737d"/><rect x="3.5" y="0.5" width="1.7" height="1.5" fill="#6a737d"/><rect x="6.8" y="0.5" width="1.7" height="1.5" fill="#6a737d"/></svg><div class="tt">Implement something else</div><div class="mt">Game#20 opened by Kenix3</div><div class="lbs"><span class="lb" style="background:#a2eeef;color:#000">enhancement</span></div></div></div><div class="sbt"><div class="sbh"></div></div></div><div class="col" style="left:1122.0px"><div class="ch"><span class="hd"><span class="cnt">15</span><span class="cn">Funzies</span></span><svg class="plus" width="8" height="8" viewBox="0 0 8 8"><rect x="3.2" y="0.3" width="1.1" height="7.5" fill="#444d56"/><rect x="0.2" y="3.5" width="7.2" height="1.1" fill="#444d56"/></svg><svg class="cdots" width="9" height="3" viewBox="0 0 9 3"><rect x="0.2" y="0.5" width="1.7" height="1.5" fill="#6a737d"/><rect x="3.5" y="0.5" width="1.7" height="1.5" fill="#6a737d"/><rect x="6.8" y="0.5" width="1.7" height="1.5" fill="#6a737d"/></svg></div><div class="cards"><div class="cd"><svg class="ic" width="8.9" height="10.2" viewBox="0 0 14 16"><circle cx="7" cy="8" r="6.3" fill="none" stroke="#28a745" stroke-width="1.35"/><rect x="6" y="3.6" width="2" height="4.5" fill="#28a745"/><rect x="6" y="10.5" width="2" height="1.9" fill="#28a745"/></svg><svg class="dots" width="9" height="3" viewBox="0 0 9 3"><rect x="0.2" y="0.5" width="1.7" height="1.5" fill="#6a737d"/><rect x="3.5" y="0.5" width="1.7" height="1.5" fill="#6a737d"/><rect x="6.8" y="0.5" width="1.7" height="1.5" fill="#6a737d"/></svg><div class="tt">Official RSC non-Kosher Changes</div><div class="mt">Game#50 opened by Kenix3</div><div class="lbs"><span class="lb" style="background:#c2dcdc;color:#000">non rsc kosher</span><span class="lb" style="background:#ffffff;color:#000">wontfix</span></div></div><div class="cd"><svg class="ic" width="8.9" height="10.2" viewBox="0 0 14 16"><circle cx="7" cy="8" r="6.3" fill="none" stroke="#28a745" stroke-width="1.35"/><rect x="6" y="3.6" width="2" height="4.5" fill="#28a745"/><rect x="6" y="10.5" width="2" height="1.9" fill="#28a745"/></svg><svg class="dots" width="9" height="3" viewBox="0 0 9 3"><rect x="0.2" y="0.5" width="1.7" height="1.5" fill="#6a737d"/><rect x="3.5" y="0.5" width="1.7" height="1.5" fill="#6a737d"/><rect x="6.8" y="0.5" width="1.7" height="1.5" fill="#6a737d"/></svg><div class="tt">Allow players to choose their<br>character&#x27;s colour from hex RGB<br>rather than the current player change<br>appearance interface</div><div class="mt">Game#141 opened by Kenix3</div><div class="lbs"><span class="lb" style="background:#a2eeef;color:#000">enhancement</span><span class="lb" style="background:#c2dcdc;color:#000">non rsc kosher</span></div></div><div class="cd"><svg class="ic" width="8.9" height="10.2" viewBox="0 0 14 16"><circle cx="7" cy="8" r="6.3" fill="none" stroke="#28a745" stroke-width="1.35"/><rect x="6" y="3.6" width="2" height="4.5" fill="#28a745"/><rect x="6" y="10.5" width="2" height="1.9" fill="#28a745"/></svg><svg class="dots" width="9" height="3" viewBox="0 0 9 3"><rect x="0.2" y="0.5" width="1.7" height="1.5" fill="#6a737d"/><rect x="3.5" y="0.5" width="1.7" height="1.5" fill="#6a737d"/><rect x="6.8" y="0.5" width="1.7" height="1.5" fill="#6a737d"/></svg><div class="tt">Allow players to input RGB and/or hex<br>colour codes in @ran@ colour control</div><div class="mt">Game#142 opened by Kenix3</div><div class="lbs"><span class="lb" style="background:#a2eeef;color:#000">enhancement</span></div></div><div class="cd"><svg class="ic" width="8.9" height="10.2" viewBox="0 0 14 16"><circle cx="7" cy="8" r="6.3" fill="none" stroke="#28a745" stroke-width="1.35"/><rect x="6" y="3.6" width="2" height="4.5" fill="#28a745"/><rect x="6" y="10.5" width="2" height="1.9" fill="#28a745"/></svg><svg class="dots" width="9" height="3" viewBox="0 0 9 3"><rect x="0.2" y="0.5" width="1.7" height="1.5" fill="#6a737d"/><rect x="3.5" y="0.5" width="1.7" height="1.5" fill="#6a737d"/><rect x="6.8" y="0.5" width="1.7" height="1.5" fill="#6a737d"/></svg><div class="tt">Option to enable custom spells</div><div class="mt">Game#122 opened by Marwolf</div><div class="lbs"><span class="lb" style="background:#a2eeef;color:#000">enhancement</span><span class="lb" style="background:#c2dcdc;color:#000">non rsc kosher</span></div></div><div class="cd"><svg class="ic" width="8.9" height="10.2" viewBox="0 0 14 16"><circle cx="7" cy="8" r="6.3" fill="none" stroke="#28a745" stroke-width="1.35"/><rect x="6" y="3.6" width="2" height="4.5" fill="#28a745"/><rect x="6" y="10.5" width="2" height="1.9" fill="#28a745"/></svg><svg class="dots" width="9" height="3" viewBox="0 0 9 3"><rect x="0.2" y="0.5" width="1.7" height="1.5" fill="#6a737d"/><rect x="3.5" y="0.5" width="1.7" height="1.5" fill="#6a737d"/><rect x="6.8" y="0.5" width="1.7" height="1.5" fill="#6a737d"/></svg><div class="tt">Be able to completely disable lottery<br>through settings.</div><div class="mt">Game#104 opened by Kenix3</div><div class="lbs"><span class="lb" style="background:#a2eeef;color:#000">enhancement</span><span class="lb" style="background:#c2dcdc;color:#000">non rsc kosher</span></div><svg class="av" width="11.6" height="11.6" viewBox="0 0 23 23"><rect width="23" height="23" fill="#f0f0f0"/><rect x="1.5" y="0.8" width="7.4" height="4.4" fill="#76d26a"/><rect x="13.8" y="0.8" width="7.4" height="4.4" fill="#76d26a"/><rect x="5.5" y="8.8" width="12" height="12" fill="#76d26a"/></svg></div><div class="cd"><svg class="ic" width="8.9" height="10.2" viewBox="0 0 14 16"><circle cx="7" cy="8" r="6.3" fill="none" stroke="#28a745" stroke-width="1.35"/><rect x="6" y="3.6" width="2" height="4.5" fill="#28a745"/><rect x="6" y="10.5" width="2" height="1.9" fill="#28a745"/></svg><svg class="dots" width="9" height="3" viewBox="0 0 9 3"><rect x="0.2" y="0.5" width="1.7" height="1.5" fill="#6a737d"/><rect x="3.5" y="0.5" width="1.7" height="1.5" fill="#6a737d"/><rect x="6.8" y="0.5" width="1.7" height="1.5" fill="#6a737d"/></svg><div class="tt">Withdrawl All stops at 1</div><div class="mt">Game#91 opened by kInGkRiStOf</div><div class="lbs"><span class="lb" style="background:#a2eeef;color:#000">enhancement</span><span class="lb" style="background:#c2dcdc;color:#000">non rsc kosher</span></div></div><div class="cd"><svg class="ic" width="8.9" height="10.2" viewBox="0 0 14 16"><circle cx="7" cy="8" r="6.3" fill="none" stroke="#28a745" stroke-width="1.35"/><rect x="6" y="3.6" width="2" height="4.5" fill="#28a745"/><rect x="6" y="10.5" width="2" height="1.9" fill="#28a745"/></svg><svg class="dots" width="9" height="3" viewBox="0 0 9 3"><rect x="0.2" y="0.5" width="1.7" height="1.5" fill="#6a737d"/><rect x="3.5" y="0.5" width="1.7" height="1.5" fill="#6a737d"/><rect x="6.8" y="0.5" width="1.7" height="1.5" fill="#6a737d"/></svg><div class="tt">Option to allow players point to point<br>teleportation, persistant database<br>setting</div><div class="mt">Game#119 opened by Marwolf</div><div class="lbs"><span class="lb" style="background:#a2eeef;color:#000">enhancement</span><span class="lb" style="background:#c2dcdc;color:#000">non rsc kosher</span></div></div></div></div><div class="col" style="left:1345.0px"><div class="ch"><span class="hd"><span class="cnt">34</span><span class="cn">Closed</span></span><svg class="plus" width="8" height="8" viewBox="0 0 8 8"><rect x="3.2" y="0.3" width="1.1" height="7.5" fill="#444d56"/><rect x="0.2" y="3.5" width="7.2" height="1.1" fill="#444d56"/></svg><svg class="cdots" width="9" height="3" viewBox="0 0 9 3"><rect x="0.2" y="0.5" width="1.7" height="1.5" fill="#6a737d"/><rect x="3.5" y="0.5" width="1.7" height="1.5" fill="#6a737d"/><rect x="6.8" y="0.5" width="1.7" height="1.5" fill="#6a737d"/></svg></div><div class="cards sc"><div class="cd hov"><svg class="ic icc" width="9.6" height="9.6" viewBox="0 0 16 16"><path fill="#cb2431" d="M7 10h2v2H7v-2zm2-6H7v5h2V4zm1.5 1.5l-1 1L12 9l4-4.5-1-1L12 7l-1.5-1.5zM8 13.7A5.710 5.710 0 0 1 2.3 8c0-3.14 2.56-5.7 5.7-5.7 1.83 0 3.45.88 4.5 2.2l.92-.92A6.947 6.947 0 0 0 8 1C4.140 1 1 4.140 1 8s3.140 7 7 7 7-3.140 7-7l-1.520 1.520c-.66 2.410-2.860 4.190-5.480 4.190v-.01z"/></svg><svg class="dots" width="9" height="3" viewBox="0 0 9 3"><rect x="0.2" y="0.5" width="1.7" height="1.5" fill="#6a737d"/><rect x="3.5" y="0.5" width="1.7" height="1.5" fill="#6a737d"/><rect x="6.8" y="0.5" width="1.7" height="1.5" fill="#6a737d"/></svg><div class="tt">Not all EXP award and skill<br>events have definitions in the<br>database</div><div class="mt">Game#62 opened by Kenix3</div><div class="lbs"><span class="lb" style="background:#008672;color:#fff">help wanted</span></div></div><div class="cd"><svg class="ic icc" width="9.6" height="9.6" viewBox="0 0 16 16"><path fill="#cb2431" d="M7 10h2v2H7v-2zm2-6H7v5h2V4zm1.5 1.5l-1 1L12 9l4-4.5-1-1L12 7l-1.5-1.5zM8 13.7A5.710 5.710 0 0 1 2.3 8c0-3.14 2.56-5.7 5.7-5.7 1.83 0 3.45.88 4.5 2.2l.92-.92A6.947 6.947 0 0 0 8 1C4.140 1 1 4.140 1 8s3.140 7 7 7 7-3.140 7-7l-1.520 1.520c-.66 2.410-2.860 4.190-5.480 4.190v-.01z"/></svg><svg class="dots" width="9" height="3" viewBox="0 0 9 3"><rect x="0.2" y="0.5" width="1.7" height="1.5" fill="#6a737d"/><rect x="3.5" y="0.5" width="1.7" height="1.5" fill="#6a737d"/><rect x="6.8" y="0.5" width="1.7" height="1.5" fill="#6a737d"/></svg><div class="tt">bug tester in-game role</div><div class="mt">Game#89 opened by Marwolf</div><div class="lbs"><span class="lb" style="background:#a2eeef;color:#000">enhancement</span></div></div><div class="cd"><svg class="ic icc" width="9.6" height="9.6" viewBox="0 0 16 16"><path fill="#cb2431" d="M7 10h2v2H7v-2zm2-6H7v5h2V4zm1.5 1.5l-1 1L12 9l4-4.5-1-1L12 7l-1.5-1.5zM8 13.7A5.710 5.710 0 0 1 2.3 8c0-3.14 2.56-5.7 5.7-5.7 1.83 0 3.45.88 4.5 2.2l.92-.92A6.947 6.947 0 0 0 8 1C4.140 1 1 4.140 1 8s3.140 7 7 7 7-3.140 7-7l-1.520 1.520c-.66 2.410-2.860 4.190-5.480 4.190v-.01z"/></svg><svg class="dots" width="9" height="3" viewBox="0 0 9 3"><rect x="0.2" y="0.5" width="1.7" height="1.5" fill="#6a737d"/><rect x="3.5" y="0.5" width="1.7" height="1.5" fill="#6a737d"/><rect x="6.8" y="0.5" width="1.7" height="1.5" fill="#6a737d"/></svg><div class="tt">::update command able to be<br>set a specific server time for<br>update window</div><div class="mt">Game#158 opened by Marwolf</div><div class="lbs"><span class="lb" style="background:#a2eeef;color:#000">enhancement</span></div></div><div class="cd"><svg class="ic icc" width="9.6" height="9.6" viewBox="0 0 16 16"><path fill="#cb2431" d="M7 10h2v2H7v-2zm2-6H7v5h2V4zm1.5 1.5l-1 1L12 9l4-4.5-1-1L12 7l-1.5-1.5zM8 13.7A5.710 5.710 0 0 1 2.3 8c0-3.14 2.56-5.7 5.7-5.7 1.83 0 3.45.88 4.5 2.2l.92-.92A6.947 6.947 0 0 0 8 1C4.140 1 1 4.140 1 8s3.140 7 7 7 7-3.140 7-7l-1.520 1.520c-.66 2.410-2.860 4.190-5.480 4.190v-.01z"/></svg><svg class="dots" width="9" height="3" viewBox="0 0 9 3"><rect x="0.2" y="0.5" width="1.7" height="1.5" fill="#6a737d"/><rect x="3.5" y="0.5" width="1.7" height="1.5" fill="#6a737d"/><rect x="6.8" y="0.5" width="1.7" height="1.5" fill="#6a737d"/></svg><div class="tt">Zeke&#x27;s scimitar prices for steel<br>and mith scim are incorrect</div><div class="mt">Game#187 opened by ipkpjersi</div><div class="lbs"><span class="lb" style="background:#c2dcdc;color:#000">non rsc kosher</span></div></div><div class="cd"><svg class="ic icc" width="9.6" height="9.6" viewBox="0 0 16 16"><path fill="#cb2431" d="M7 10h2v2H7v-2zm2-6H7v5h2V4zm1.5 1.5l-1 1L12 9l4-4.5-1-1L12 7l-1.5-1.5zM8 13.7A5.710 5.710 0 0 1 2.3 8c0-3.14 2.56-5.7 5.7-5.7 1.83 0 3.45.88 4.5 2.2l.92-.92A6.947 6.947 0 0 0 8 1C4.140 1 1 4.140 1 8s3.140 7 7 7 7-3.140 7-7l-1.520 1.520c-.66 2.410-2.860 4.190-5.480 4.190v-.01z"/></svg><svg class="dots" width="9" height="3" viewBox="0 0 9 3"><rect x="0.2" y="0.5" width="1.7" height="1.5" fill="#6a737d"/><rect x="3.5" y="0.5" width="1.7" height="1.5" fill="#6a737d"/><rect x="6.8" y="0.5" width="1.7" height="1.5" fill="#6a737d"/></svg><div class="tt">Add a way to differentiate<br>between dev and live server</div><div class="mt">Game#219 opened by ipkpjersi</div><div class="lbs"><span class="lb" style="background:#a2eeef;color:#000">enhancement</span></div><svg class="av" width="12" height="12" viewBox="0 0 12 12"><rect width="12" height="12" rx="1.5" fill="#0b0d0f"/><rect x="1" y="5" width="2" height="3" fill="#3c5a6a" opacity="0.7"/><rect x="5" y="5" width="2" height="2" fill="#2e4a5e" opacity="0.6"/><rect x="3" y="10" width="6" height="1.5" fill="#4a6a7a" opacity="0.5"/></svg></div><div class="cd"><svg class="ic icc" width="9.6" height="9.6" viewBox="0 0 16 16"><path fill="#cb2431" d="M7 10h2v2H7v-2zm2-6H7v5h2V4zm1.5 1.5l-1 1L12 9l4-4.5-1-1L12 7l-1.5-1.5zM8 13.7A5.710 5.710 0 0 1 2.3 8c0-3.14 2.56-5.7 5.7-5.7 1.83 0 3.45.88 4.5 2.2l.92-.92A6.947 6.947 0 0 0 8 1C4.140 1 1 4.140 1 8s3.140 7 7 7 7-3.140 7-7l-1.520 1.520c-.66 2.410-2.860 4.190-5.480 4.190v-.01z"/></svg><svg class="dots" width="9" height="3" viewBox="0 0 9 3"><rect x="0.2" y="0.5" width="1.7" height="1.5" fill="#6a737d"/><rect x="3.5" y="0.5" width="1.7" height="1.5" fill="#6a737d"/><rect x="6.8" y="0.5" width="1.7" height="1.5" fill="#6a737d"/></svg><div class="tt">Rats (big and small) drop rat<br>tails almost every time with<br>bones</div><div class="mt">Game#161 opened by Marwolf</div><div class="lbs"><span class="lb" style="background:#ee9b9b;color:#000">bug</span></div></div><div class="cd"><svg class="ic icc" width="9.6" height="9.6" viewBox="0 0 16 16"><path fill="#cb2431" d="M7 10h2v2H7v-2zm2-6H7v5h2V4zm1.5 1.5l-1 1L12 9l4-4.5-1-1L12 7l-1.5-1.5zM8 13.7A5.710 5.710 0 0 1 2.3 8c0-3.14 2.56-5.7 5.7-5.7 1.83 0 3.45.88 4.5 2.2l.92-.92A6.947 6.947 0 0 0 8 1C4.140 1 1 4.140 1 8s3.140 7 7 7 7-3.140 7-7l-1.520 1.520c-.66 2.410-2.860 4.190-5.480 4.190v-.01z"/></svg><svg class="dots" width="9" height="3" viewBox="0 0 9 3"><rect x="0.2" y="0.5" width="1.7" height="1.5" fill="#6a737d"/><rect x="3.5" y="0.5" width="1.7" height="1.5" fill="#6a737d"/><rect x="6.8" y="0.5" width="1.7" height="1.5" fill="#6a737d"/></svg><div class="tt">Players&#x27; names should be<br>white, not yellow.</div><div class="mt">Game#156 opened by ipkpjersi</div><div class="lbs"><span class="lb" style="background:#a2eeef;color:#000">enhancement</span></div></div></div><div class="sbt"><div class="sbh"></div></div></div>
<div id="edge"></div>
</body></html>
